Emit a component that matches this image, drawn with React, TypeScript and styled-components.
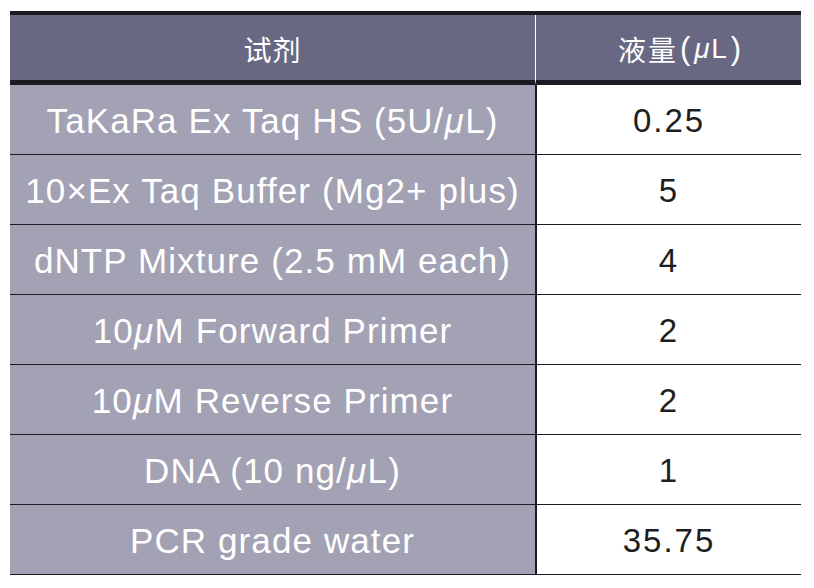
import styled, { createGlobalStyle } from "styled-components"

type Reagent = {
  name: React.ReactNode
  amount: string
}

const Mu = styled.span`
  font-style: italic;
  letter-spacing: 1.5px;
`

const reagents: Reagent[] = [
  { name: <>TaKaRa Ex Taq HS (5U/<Mu>μ</Mu>L)</>, amount: "0.25" },
  { name: "10×Ex Taq Buffer (Mg2+ plus)", amount: "5" },
  { name: "dNTP Mixture (2.5 mM each)", amount: "4" },
  { name: <>10<Mu>μ</Mu>M Forward Primer</>, amount: "2" },
  { name: <>10<Mu>μ</Mu>M Reverse Primer</>, amount: "2" },
  { name: <>DNA (10 ng/<Mu>μ</Mu>L)</>, amount: "1" },
  { name: "PCR grade water", amount: "35.75" },
]

export default function App() {
  return (
    <>
      <GlobalStyle />
      <Page>
        <Grid>
          <HeadCell>试剂</HeadCell>
          <HeadCell $divider>
            液量<Paren>(</Paren><Mu>μ</Mu>L<Paren>)</Paren>
          </HeadCell>
          {reagents.map((r, i) => (
            <Row key={i}>
              <NameCell>{r.name}</NameCell>
              <AmountCell>{r.amount}</AmountCell>
            </Row>
          ))}
        </Grid>
      </Page>
    </>
  )
}

const GlobalStyle = createGlobalStyle`
  body {
    margin: 0;
    background: #ffffff;
    font-family: "Liberation Sans", Arial, "Noto Sans CJK SC", sans-serif;
  }
`

const Page = styled.div`
  padding: 11px 0 0 10px;
`

const Grid = styled.div`
  display: grid;
  grid-template-columns: 525px 266px;
  width: 791px;
  border-top: 4px solid #1c1a22;
`

const HeadCell = styled.div<{ $divider?: boolean }>`
  height: 70px;
  box-sizing: border-box;
  display: flex;
  align-items: center;
  justify-content: center;
  background: #686882;
  color: #ffffff;
  font-family: "Liberation Sans", "Noto Sans CJK SC", sans-serif;
  font-size: 28px;
  letter-spacing: ${p => (p.$divider ? "2px" : "1px")};
  border-bottom: 5px solid #1c1a22;
  border-left: ${p => (p.$divider ? "1px solid #ffffff" : "none")};
  padding: ${p => (p.$divider ? "2px 0 0 26px" : "2px 0 0 0")};
`

const Paren = styled.span`
  font-size: 31px;
  padding: 0 2px;
`

const Row = styled.div`
  display: contents;
`

const BaseCell = styled.div`
  height: 70px;
  box-sizing: border-box;
  display: flex;
  align-items: center;
  justify-content: center;
  border-bottom: 1.5px solid #1c1a22;
  font-size: 35px;
  padding-top: 3px;
  white-space: nowrap;
`

const NameCell = styled(BaseCell)`
  background: #a3a1b4;
  color: #ffffff;
  letter-spacing: 1.1px;
`

const AmountCell = styled(BaseCell)`
  background: #ffffff;
  color: #1e1e1e;
  border-left: 2px solid #1c1a22;
  font-size: 33px;
  letter-spacing: 2px;
`
